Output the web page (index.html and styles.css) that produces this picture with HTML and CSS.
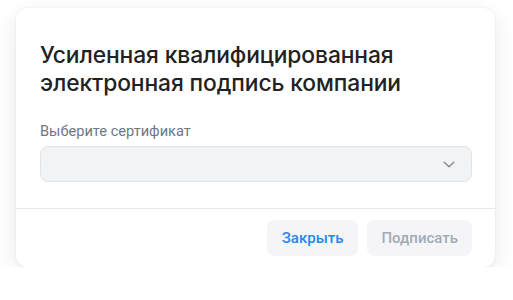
FILE: index.html
```html
<!DOCTYPE html>
<html lang="ru">
<head>
<meta charset="utf-8">
<link rel="stylesheet" href="styles.css">
</head>
<body>
<div class="modal">
  <div class="modal-body">
    <h1 class="title">Усиленная квалифицированная электронная подпись компании</h1>
    <div class="field">
      <div class="label">Выберите сертификат</div>
      <div class="select">
        <svg class="chevron" width="16" height="16" viewBox="0 0 16 16"><path d="M3.2 6.2 L8 10.8 L12.8 6.2" fill="none" stroke="#818c99" stroke-width="1.4" stroke-linecap="round" stroke-linejoin="round"/></svg>
      </div>
    </div>
  </div>
  <div class="modal-footer">
    <button class="btn btn-close">Закрыть</button>
    <button class="btn btn-sign">Подписать</button>
  </div>
</div>
</body>
</html>
```
FILE: styles.css
```css
html, body { margin: 0; padding: 0; background: #ffffff; }
body { padding: 8px 18px 0 16px; font-family: Roboto, "Noto Sans", sans-serif; }
.modal {
  width: 479px;
  height: 259px;
  background: #fff;
  border-radius: 12px;
  box-shadow: 0 8px 26px rgba(0,0,0,0.09), 0 0 3px rgba(0,0,0,0.07);
  display: flex;
  flex-direction: column;
  box-sizing: border-box;
}
.modal-body {
  padding: 33px 23px 24px 24px;
  border-bottom: 1px solid #e7e8ec;
  flex: 1;
}
.title {
  margin: 0;
  font-family: Inter, "Noto Sans", sans-serif;
  font-size: 22.8px;
  line-height: 28px;
  font-weight: 500;
  color: #222222;
  letter-spacing: -0.1px;
}
.field { margin-top: 25px; }
.label {
  font-size: 14.6px;
  line-height: 18px;
  color: #6d7885;
  margin-bottom: 6px;
}
.select {
  height: 36px;
  box-sizing: border-box;
  background: #f2f3f5;
  border: 1px solid #e3e4e8;
  border-radius: 8px;
  display: flex;
  align-items: center;
  justify-content: flex-end;
  padding-right: 14px;
}
.modal-footer {
  display: flex;
  justify-content: flex-end;
  gap: 9px;
  padding: 11px 23px 11px 24px;
}
.btn {
  height: 36px;
  border: none;
  border-radius: 8px;
  background: #f5f5f7;
  font-family: Roboto, "Noto Sans", sans-serif;
  font-size: 15px;
  font-weight: 500;
  padding: 0 15px;
}
.btn-close { color: #2688eb; }
.btn-sign { color: #a3abb6; padding: 0 14px; }
```
